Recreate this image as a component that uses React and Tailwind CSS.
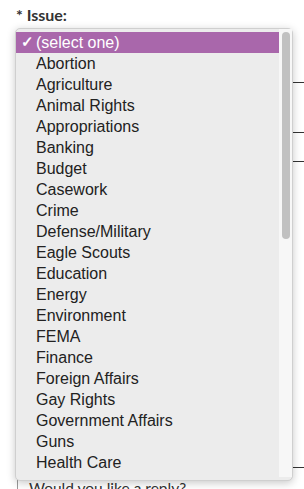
import React from 'react';

const ISSUES = [
  'Abortion', 'Agriculture', 'Animal Rights', 'Appropriations', 'Banking', 'Budget',
  'Casework', 'Crime', 'Defense/Military', 'Eagle Scouts', 'Education', 'Energy',
  'Environment', 'FEMA', 'Finance', 'Foreign Affairs', 'Gay Rights',
  'Government Affairs', 'Guns', 'Health Care',
];

const Field = ({ h }) => <div className={`${h} ml-[16px] border-b border-[#333]`} />;

const App = () => (
  <div className="relative w-[304px] h-[489px] overflow-hidden bg-white font-['Lato',sans-serif] text-[#333]">
    {/* page behind the open menu */}
    <div className="flex flex-col">
      <label className="h-[28px] pl-[16px] pt-[5px] text-[16px] font-bold leading-[20px]">* Issue:</label>
      <Field h="h-[55px]" />
      <Field h="h-[50px]" />
      <Field h="h-[29px]" />
      <Field h="h-[306px]" />
      <div className="flex items-start gap-[5px] pl-[17px] pt-[11px]">
        <span className="w-[7px] h-[16px] border border-[#999] border-r-0 shrink-0" />
        <span className="text-[15.5px] leading-[16px] mt-[1px]">Would you like a reply?</span>
      </div>
    </div>

    {/* open select menu */}
    <div className="absolute left-[15px] top-[28px] w-[278px] h-[453px] flex rounded-[5px] border border-[#cfcfcf] bg-[#ececec] shadow-[0_2px_8px_rgba(0,0,0,0.22)] font-['Liberation_Sans',Arial,sans-serif]">
      <ul className="flex-1 flex flex-col pt-[3px]">
        <li className="relative h-[21px] flex items-center pl-[20px] bg-[#a967ab] text-white text-[16px]">
          <span className="absolute left-[5px] text-[15px] font-bold">✓</span>
          (select one)
        </li>
        {ISSUES.map((t) => (
          <li key={t} className="h-[21px] flex items-center pl-[20px] text-[16px] text-[#222]">{t}</li>
        ))}
      </ul>
      <div className="w-[13px] mb-[3px] bg-[#f7f7f7] flex justify-center pt-[3px]">
        <div className="w-[8px] h-[207px] rounded-full bg-[#c1c1c1]" />
      </div>
    </div>
  </div>
);

export default App;
